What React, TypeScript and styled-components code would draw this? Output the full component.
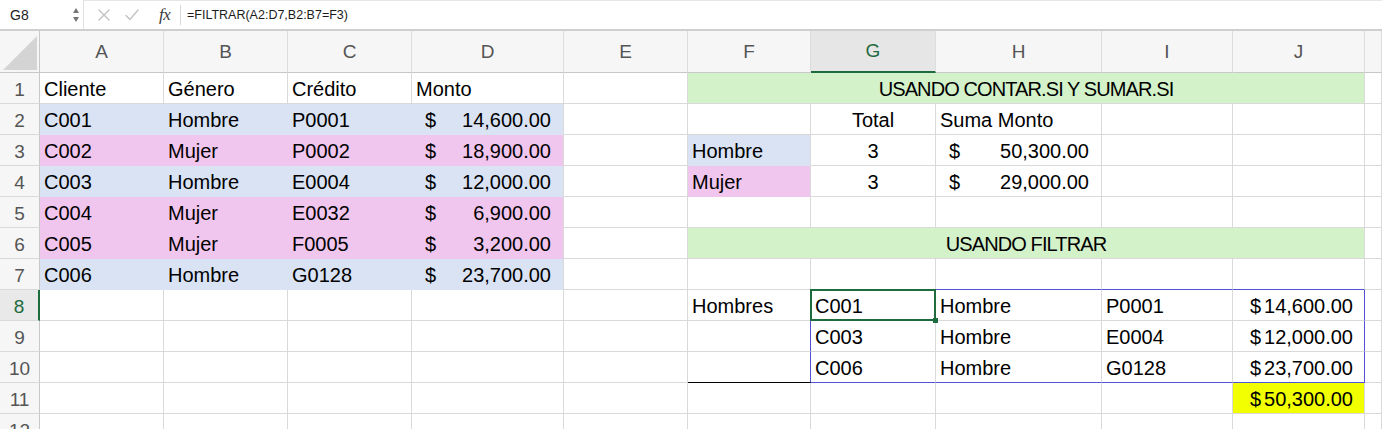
import React from "react";
import styled, { createGlobalStyle } from "styled-components";

const GRID = "#d9d9d9";
const HEAD_LINE = "#c8c8c8";
const BLUE = "#dae3f4";
const PINK = "#f1c6ee";
const GREEN = "#d4f2ca";
const YELLOW = "#f2ff00";
const SPILL = "#5252d4";
const EXCEL_GREEN = "#1e6b3e";

const GlobalStyle = createGlobalStyle`
  html, body {
    margin: 0;
    padding: 0;
    background: #fff;
  }
  body {
    font-family: "Liberation Sans", Arial, sans-serif;
    overflow: hidden;
  }
`;

const Window = styled.div`
  width: 1382px;
  height: 429px;
  overflow: hidden;
  display: flex;
  flex-direction: column;
`;

const FormulaBar = styled.div`
  height: 29px;
  flex-shrink: 0;
  display: flex;
  align-items: stretch;
  border-bottom: 2px solid #cfcfcf;
`;

const NameBox = styled.div`
  width: 84px;
  box-sizing: border-box;
  display: flex;
  align-items: center;
  justify-content: space-between;
  padding: 0 3px 0 10px;
  border-right: 1px solid #e0e0e0;
  font-size: 14px;
  color: #222;
`;

const Actions = styled.div`
  width: 96px;
  display: flex;
  align-items: center;
  gap: 13px;
  padding-left: 13px;
  box-sizing: border-box;
  border-top: 1px solid #e6e6e6;
`;

const Fx = styled.span`
  font-family: "Liberation Serif", "Times New Roman", serif;
  font-style: italic;
  font-size: 17px;
  color: #3a3a3a;
  margin-left: 6px;
  letter-spacing: -0.5px;
`;

const FormulaText = styled.div`
  flex: 1;
  display: flex;
  align-items: center;
  border-top: 1px solid #e6e6e6;
  font-size: 12.5px;
  color: #1b1b1b;
  &::before {
    content: "";
    width: 1px;
    height: 20px;
    background: #d6d6d6;
    margin-right: 6px;
  }
`;

const Sheet = styled.div`
  display: grid;
  grid-template-columns: 40px 124px 124px 124px 152px 124px 123px 125px 166px 131px 132px 1fr;
  grid-template-rows: 42px repeat(12, 31px);
`;

const Corner = styled.div`
  background: #f6f6f6;
  border-right: 1px solid ${HEAD_LINE};
  border-bottom: 1px solid ${HEAD_LINE};
  display: flex;
  align-items: flex-end;
  justify-content: flex-end;
  padding: 0 2px 2px 0;
`;

const ColHead = styled.div<{ $active?: boolean }>`
  display: flex;
  align-items: center;
  justify-content: center;
  font-size: 19px;
  color: ${({ $active }) => ($active ? EXCEL_GREEN : "#555")};
  background: ${({ $active }) => ($active ? "#e6e6e6" : "#f6f6f6")};
  border-right: 1px solid #dddddd;
  border-bottom: ${({ $active }) => ($active ? `2px solid ${EXCEL_GREEN}` : `1px solid ${HEAD_LINE}`)};
`;

const RowNum = styled.div<{ $active?: boolean }>`
  display: flex;
  align-items: center;
  justify-content: center;
  box-sizing: border-box;
  font-size: 19px;
  padding-top: 3px;
  color: ${({ $active }) => ($active ? EXCEL_GREEN : "#555")};
  background: ${({ $active }) => ($active ? "#e9e9e9" : "#f6f6f6")};
  border-right: ${({ $active }) => ($active ? `2px solid ${EXCEL_GREEN}` : `1px solid ${HEAD_LINE}`)};
  border-bottom: 1px solid ${GRID};
`;

const Cell = styled.div<{
  $fill?: string;
  $align?: "left" | "center" | "right";
  $span?: number;
  $right: string;
  $bottom: string;
  $title?: boolean;
  $selected?: boolean;
}>`
  position: relative;
  box-sizing: border-box;
  display: flex;
  align-items: center;
  justify-content: ${({ $align }) =>
    $align === "center" ? "center" : $align === "right" ? "flex-end" : "flex-start"};
  grid-column: span ${({ $span }) => $span ?? 1};
  padding: 3px 4px 0 4px;
  font-size: 20px;
  color: #000;
  white-space: nowrap;
  letter-spacing: ${({ $title }) => ($title ? "-0.9px" : "normal")};
  background: ${({ $fill }) => $fill ?? "#fff"};
  border-right: 1px solid ${({ $right }) => $right};
  border-bottom: 1px solid ${({ $bottom }) => $bottom};
  z-index: ${({ $selected }) => ($selected ? 2 : "auto")};

  ${({ $selected }) =>
    $selected &&
    `
    &::after {
      content: "";
      position: absolute;
      top: -1px;
      left: -1px;
      right: -1px;
      bottom: -1px;
      border: 2px solid ${EXCEL_GREEN};
    }
    &::before {
      content: "";
      position: absolute;
      right: -3px;
      bottom: -3px;
      width: 5px;
      height: 5px;
      background: ${EXCEL_GREEN};
      z-index: 3;
    }
  `}
`;

const Accounting = styled.div`
  flex: 1;
  display: flex;
  justify-content: space-between;
  padding: 0 8px 0 9px;
`;

const Currency = styled.span`
  padding-right: 7px;
  & > span {
    margin-right: 3px;
  }
`;

type Spec = {
  text?: string;
  fill?: string;
  align?: "left" | "center" | "right";
  span?: number;
  acct?: string;
  cur?: string;
  title?: boolean;
  selected?: boolean;
};

const rows: Record<number, Record<number, Spec>> = {
  1: {
    0: { text: "Cliente" },
    1: { text: "Género" },
    2: { text: "Crédito" },
    3: { text: "Monto" },
    5: { text: "USANDO CONTAR.SI Y SUMAR.SI", fill: GREEN, span: 5, align: "center", title: true },
  },
  2: {
    0: { text: "C001", fill: BLUE },
    1: { text: "Hombre", fill: BLUE },
    2: { text: "P0001", fill: BLUE },
    3: { acct: "14,600.00", fill: BLUE },
    6: { text: "Total", align: "center" },
    7: { text: "Suma Monto" },
  },
  3: {
    0: { text: "C002", fill: PINK },
    1: { text: "Mujer", fill: PINK },
    2: { text: "P0002", fill: PINK },
    3: { acct: "18,900.00", fill: PINK },
    5: { text: "Hombre", fill: BLUE },
    6: { text: "3", align: "center" },
    7: { acct: "50,300.00" },
  },
  4: {
    0: { text: "C003", fill: BLUE },
    1: { text: "Hombre", fill: BLUE },
    2: { text: "E0004", fill: BLUE },
    3: { acct: "12,000.00", fill: BLUE },
    5: { text: "Mujer", fill: PINK },
    6: { text: "3", align: "center" },
    7: { acct: "29,000.00" },
  },
  5: {
    0: { text: "C004", fill: PINK },
    1: { text: "Mujer", fill: PINK },
    2: { text: "E0032", fill: PINK },
    3: { acct: "6,900.00", fill: PINK },
  },
  6: {
    0: { text: "C005", fill: PINK },
    1: { text: "Mujer", fill: PINK },
    2: { text: "F0005", fill: PINK },
    3: { acct: "3,200.00", fill: PINK },
    5: { text: "USANDO FILTRAR", fill: GREEN, span: 5, align: "center", title: true },
  },
  7: {
    0: { text: "C006", fill: BLUE },
    1: { text: "Hombre", fill: BLUE },
    2: { text: "G0128", fill: BLUE },
    3: { acct: "23,700.00", fill: BLUE },
  },
  8: {
    5: { text: "Hombres" },
    6: { text: "C001", selected: true },
    7: { text: "Hombre" },
    8: { text: "P0001" },
    9: { cur: "14,600.00", align: "right" },
  },
  9: {
    6: { text: "C003" },
    7: { text: "Hombre" },
    8: { text: "E0004" },
    9: { cur: "12,000.00", align: "right" },
  },
  10: {
    6: { text: "C006" },
    7: { text: "Hombre" },
    8: { text: "G0128" },
    9: { cur: "23,700.00", align: "right" },
  },
  11: {
    9: { cur: "50,300.00", align: "right", fill: YELLOW },
  },
};

const COLS = ["A", "B", "C", "D", "E", "F", "G", "H", "I", "J", ""];

// gridline colours: fills swallow their inner lines, the spill range gets a blue frame
const borders = (r: number, c: number, spec: Spec) => {
  let right = GRID;
  let bottom = GRID;
  if (spec.fill && spec.fill !== GREEN && spec.fill !== YELLOW) {
    bottom = spec.fill;
    if (c < 3) right = spec.fill;
  }
  if (r >= 8 && r <= 10 && (c === 5 || c === 9)) right = SPILL;
  if ((r === 7 || r === 10) && c >= 6 && c <= 9) bottom = SPILL;
  if (r === 10 && c === 5) bottom = "#000";
  return { right, bottom };
};

const Content: React.FC<{ spec: Spec }> = ({ spec }) => {
  if (spec.acct)
    return (
      <Accounting>
        <span>$</span>
        <span>{spec.acct}</span>
      </Accounting>
    );
  if (spec.cur)
    return (
      <Currency>
        <span>$</span>
        {spec.cur}
      </Currency>
    );
  return <>{spec.text}</>;
};

const renderRow = (r: number) => {
  const specs = rows[r] ?? {};
  const cells: React.ReactNode[] = [
    <RowNum key={`h${r}`} $active={r === 8}>
      {r}
    </RowNum>,
  ];
  for (let c = 0; c < COLS.length; ) {
    const spec = specs[c] ?? {};
    const span = spec.span ?? 1;
    const { right, bottom } = borders(r, c + span - 1, spec);
    cells.push(
      <Cell
        key={`${r}-${c}`}
        $fill={spec.fill}
        $align={spec.align}
        $span={span}
        $right={right}
        $bottom={bottom}
        $title={spec.title}
        $selected={spec.selected}
      >
        <Content spec={spec} />
      </Cell>
    );
    c += span;
  }
  return cells;
};

const Stepper = () => (
  <svg width="8" height="18" viewBox="0 0 8 18">
    <path d="M4 2 L7 7 L1 7 Z" fill="#777" />
    <path d="M4 16 L7 11 L1 11 Z" fill="#777" />
  </svg>
);

const Cross = () => (
  <svg width="14" height="14" viewBox="0 0 14 14">
    <path d="M2 2 L12 12 M12 2 L2 12" stroke="#c2c2c2" strokeWidth="1.4" strokeLinecap="round" />
  </svg>
);

const Check = () => (
  <svg width="16" height="14" viewBox="0 0 16 14">
    <path d="M2 7.5 L6 11.5 L14 2" stroke="#c2c2c2" strokeWidth="1.4" fill="none" strokeLinecap="round" />
  </svg>
);

const App: React.FC = () => (
  <Window>
    <GlobalStyle />
    <FormulaBar>
      <NameBox>
        G8
        <Stepper />
      </NameBox>
      <Actions>
        <Cross />
        <Check />
        <Fx>fx</Fx>
      </Actions>
      <FormulaText>=FILTRAR(A2:D7,B2:B7=F3)</FormulaText>
    </FormulaBar>
    <Sheet>
      <Corner>
        <svg width="34" height="34" viewBox="0 0 34 34">
          <path d="M0 34 L34 34 L34 0 Z" fill="#d4d4d4" />
        </svg>
      </Corner>
      {COLS.map((col, i) => (
        <ColHead key={i} $active={col === "G"}>
          {col}
        </ColHead>
      ))}
      {Array.from({ length: 12 }, (_, i) => renderRow(i + 1))}
    </Sheet>
  </Window>
);

export default App;
